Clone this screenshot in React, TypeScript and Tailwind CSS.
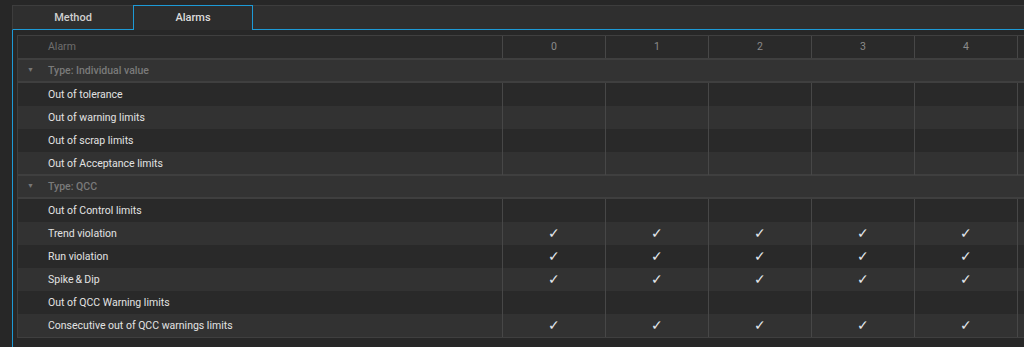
import clsx from "clsx";

interface AlarmRow {
    label: string;
    checks: boolean[];
}

interface AlarmGroup {
    title: string;
    rows: AlarmRow[];
}

const ALL = [true, true, true, true, true, false];
const NONE = [false, false, false, false, false, false];

const groups: AlarmGroup[] = [
    {
        title: "Type: Individual value",
        rows: [
            { label: "Out of tolerance", checks: NONE },
            { label: "Out of warning limits", checks: NONE },
            { label: "Out of scrap limits", checks: NONE },
            { label: "Out of Acceptance limits", checks: NONE },
        ],
    },
    {
        title: "Type: QCC",
        rows: [
            { label: "Out of Control limits", checks: NONE },
            { label: "Trend violation", checks: ALL },
            { label: "Run violation", checks: ALL },
            { label: "Spike\u2009&\u2009Dip", checks: ALL },
            { label: "Out of QCC Warning limits", checks: NONE },
            { label: "Consecutive out of QCC warnings limits", checks: ALL },
        ],
    },
];

const columns = ["0", "1", "2", "3", "4", ""];

function Tabs() {
    return (
        <div className="flex h-[25px] bg-[#2f2f2f] border-t border-[#3d3d3d]">
            <div className="w-[121px] pt-px flex items-center justify-center border-l border-[#3d3d3d] border-b border-b-[#1d9ad6] text-[11px] font-medium text-[#cfcfcf]">
                Method
            </div>
            <div className="w-[120px] -mt-px pt-px flex items-center justify-center border border-b-0 border-[#1d9ad6] text-[11px] font-medium text-[#dcdcdc] bg-[#2d2d2d]">
                Alarms
            </div>
            <div className="flex-1 border-b border-[#1d9ad6]" />
        </div>
    );
}

function HeaderRow() {
    return (
        <div className="flex h-[24px] bg-[#2a2a2a] border-b-2 border-[#3f3f3f]">
            <div className="w-[484px] shrink-0 flex items-center pl-[30px] text-[#6e6e6e]">Alarm</div>
            {columns.map((c, i) => (
                <div
                    key={i}
                    className="w-[103px] shrink-0 flex items-center justify-center border-l border-[#474747] text-[#8a8a8a]"
                >
                    {c}
                </div>
            ))}
        </div>
    );
}

function GroupRow({ title }: { title: string }) {
    return (
        <div className="flex h-[23px] items-center bg-[#333333] border-b-2 border-[#3f3f3f]">
            <span className="w-[30px] pl-[9px] text-[7px] text-[#777777]">▼</span>
            <span className="font-medium text-[#7a7a7a]">{title}</span>
        </div>
    );
}

function DataRow({ row, odd }: { row: AlarmRow; odd: boolean }) {
    return (
        <div className={clsx("flex h-[23px]", odd ? "bg-[#323232]" : "bg-[#292929]")}>
            <div className="w-[484px] shrink-0 flex items-center pl-[30px] text-[#e2e2e2]">
                {row.label}
            </div>
            {row.checks.map((on, i) => (
                <div
                    key={i}
                    className="w-[103px] shrink-0 flex items-center justify-center border-l border-[#474747] text-[14px] text-[#e4e8ee]"
                >
                    {on ? "✓" : ""}
                </div>
            ))}
        </div>
    );
}

export default function App() {
    return (
        <div
            className="w-[1024px] h-[347px] overflow-hidden bg-[#272727] pl-3 pt-[5px] text-[10.5px]"
            style={{ fontFamily: "Roboto, 'Liberation Sans', sans-serif" }}
        >
            <Tabs />
            <div className="h-full border-l border-[#1d9ad6] pl-1 pt-[5px]">
                <div className="w-[1110px] border border-[#3f3f3f]">
                    <HeaderRow />
                    {groups.map((g, gi) => (
                        <div key={g.title} className={clsx(gi > 0 && "border-t-2 border-[#3f3f3f] -mt-px")}>
                            <GroupRow title={g.title} />
                            {g.rows.map((r, ri) => (
                                <DataRow key={r.label} row={r} odd={ri % 2 === 1} />
                            ))}
                        </div>
                    ))}
                </div>
            </div>
        </div>
    );
}
